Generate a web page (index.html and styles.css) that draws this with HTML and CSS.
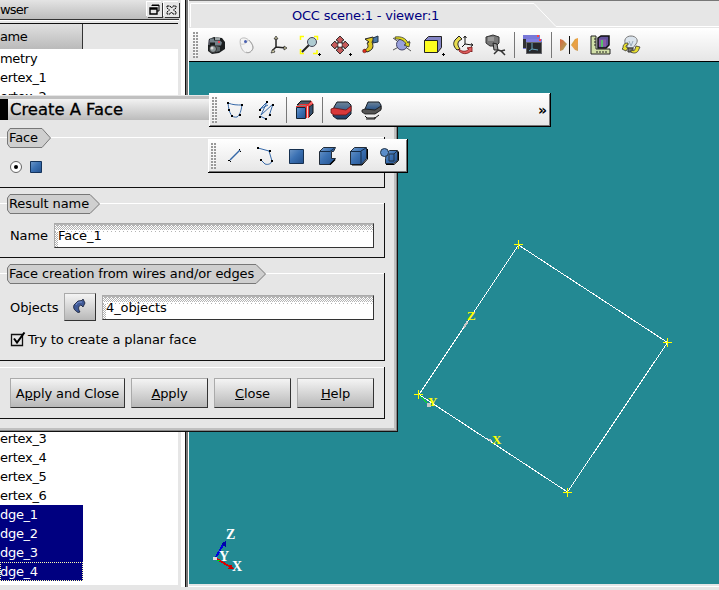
FILE: index.html
```html
<!DOCTYPE html>
<html lang="en">
<head>
<meta charset="utf-8">
<title>OCC scene</title>
<link rel="stylesheet" href="styles.css">
</head>
<body>
<svg width="0" height="0" class="defs">
  <defs>
    <linearGradient id="blue" x1="0" y1="0" x2="1" y2="1"><stop offset="0" stop-color="#6f98c8"/><stop offset=".45" stop-color="#3c72b4"/><stop offset="1" stop-color="#23508c"/></linearGradient>
    <linearGradient id="slate" x1="0" y1="0" x2="0" y2="1"><stop offset="0" stop-color="#6e8396"/><stop offset=".5" stop-color="#3a618f"/><stop offset="1" stop-color="#1c3a60"/></linearGradient>
    <linearGradient id="warm" x1="0" y1="0" x2="1" y2="1"><stop offset="0" stop-color="#d8643c"/><stop offset="1" stop-color="#a8b060"/></linearGradient>
    <linearGradient id="warm2" x1="0" y1="0" x2="1" y2="1"><stop offset="0" stop-color="#a8a850"/><stop offset=".5" stop-color="#f0a040"/><stop offset="1" stop-color="#c8a060"/></linearGradient>
    <pattern id="dither" width="4" height="8" patternUnits="userSpaceOnUse"><path d="M0 .5h4M1 1.500h3M0 2.500h1m1 0h1M1 3.500h1m1 0h1M0 4.500h1m1 0h1M1 5.500h1m1 0h1M0 7.500h1" stroke="#b4b4b4"/></pattern>
    <pattern id="dither-side" width="4" height="4" patternUnits="userSpaceOnUse"><path d="M0 .5h1m1 0h1M1 1.500h1M0 2.500h1m1 0h1M1 3.500h1" stroke="#b4b4b4"/></pattern>
  </defs>
</svg>
<div class="app">
  <aside class="browser">
    <div class="dock-title"><span>wser</span>
      <svg class="dock-btn" viewBox="0 0 15 15"><path d="M5 4V3h7v6h-2M5 3.500h7" fill="none" stroke="#000"/><path d="M3 6h7v6H3zM3 7h7" fill="none" stroke="#000" stroke-width="1.400"/></svg>
      <svg class="dock-btn" viewBox="0 0 15 15"><path d="M3 4h3l1.500 2L9 4h3v2L9.500 8 12 10v2H9L7.500 10 6 12H3v-2L5.500 8 3 6z" fill="#e6e6e6" stroke="#000" stroke-dasharray="2 .6"/></svg>
    </div>
    <div class="tree-head"><span>ame</span></div>
    <div class="tree">
      <div class="row">metry</div><div class="row">ertex_1</div><div class="row">ertex_2</div>
      <div class="gap"></div>
      <div class="row">ertex_3</div><div class="row">ertex_4</div><div class="row">ertex_5</div><div class="row">ertex_6</div>
      <div class="row sel">dge_1</div><div class="row sel">dge_2</div><div class="row sel">dge_3</div><div class="row sel cur">dge_4</div>
    </div>
  </aside>
  <div class="splitter"></div>
  <main class="viewer">
    <div class="tab">
      <svg viewBox="189 0 530 28"><path d="M189 .5h530" stroke="#777"/><path d="M190.500 27V3.500H534L556 26.500H719" fill="none" stroke="#fff"/></svg>
      <span>OCC scene:1 - viewer:1</span>
    </div>
    <div class="bar view-bar">
      <i class="grip"></i>
      <svg viewBox="202 32 31 26"><path d="M209 39l5-2 8 1 3 4v7l-6 4-7 1-4-3v-6z" fill="#1c1f20"/><path d="M210 38.500h4v2h6l2 2-1 3h-6v-3h-5z" fill="#75828a"/><path d="M215 37l5 1v2h-5z" fill="#9aa3a5"/><path d="M218 41h2v2h-2z" fill="#e45"/><path d="M209 40v5" stroke="#889"/><path d="M216 46l4 1v4l-4 1z" fill="#5a6466"/><circle cx="213" cy="49" r="3.500" fill="#8c9698" stroke="#333"/><circle cx="212" cy="48" r="1.500" fill="#ddd"/></svg>
      <svg viewBox="233 32 31 26"><path d="M240.500 39c3-2 6-1 8 1 4 4 6 8 3 11-3 3-7 2-9-1-2-3-3-8-2-11z" fill="#f4f4f4" stroke="#bbb"/><path d="M249 40c4 4 5 8 3 10-2 3-4 3-6 2" fill="none" stroke="#999" stroke-width=".8"/><path d="M241 44c3 1 6-1 7-4" fill="none" stroke="#ccc"/><circle cx="245.500" cy="41.500" r="1.500" fill="#4960b0"/></svg>
      <svg viewBox="264 32 31 26"><path d="M276 37v10M276 47l-4 4M276 47l10 1" stroke="#222" stroke-width="1.500"/><path d="M274 39l2-3 2 3zM273 49l-2 4 4-1zM284 46l3 2-3 2z" fill="#ddd8b0" stroke="#222" stroke-width=".7"/></svg>
      <svg viewBox="295 32 31 26"><path d="M300.500 40v-3.500H304M314 36.500h3.500V40M300.500 49v4.500H304M313 53.500h4V50" fill="none" stroke="#ff0" stroke-width="1.500"/><path d="M309 45l-7 7" stroke="#222" stroke-width="2"/><circle cx="312" cy="42" r="4.500" fill="#aecbd2" stroke="#445"/><path d="M318 54.500h3m-1.500-1.500v3" stroke="#000"/></svg>
      <svg viewBox="326 32 31 26"><path d="M340 36l4 4-2 1v2h-4v-2l-2-1zM340 54l4-4-2-1v-2h-4v2l-2 1zM331 45l4-4 1 2h2v4h-2l-1 2zM349 45l-4-4-1 2h-2v4h2l1 2z" fill="#c65b5b" stroke="#222" stroke-width=".9"/><path d="M338.500 43.500h3v3h-3z" fill="#fff"/><path d="M349 54.500h3m-1.500-1.500v3" stroke="#000"/></svg>
      <svg viewBox="357 32 31 26"><path d="M369 42l-4-3 8-2 1 2-2 3c2 5 1 8-5 10l-3-2c4-1 5-4 3-7z" fill="#dec820" stroke="#222"/><path d="M373 38l5-2v6l-5 1z" fill="#4a78a5" stroke="#234"/><circle cx="364.500" cy="51" r="1.800" fill="#e03020" stroke="#400" stroke-width=".5"/></svg>
      <svg viewBox="388 32 31 26"><path d="M393 38l18 13M393 50l17-9" stroke="#555"/><circle cx="402" cy="44.500" r="5.500" fill="#98a0dc" stroke="#446"/><path d="M395 37c6-1 11 1 13 6l2-1-1 5-5-2 2-1c-2-4-6-5-11-5z" fill="#ded820" stroke="#222" stroke-width=".7"/></svg>
      <svg viewBox="419 32 31 26"><path d="M424.500 40.500l4-4h13v11l-4 5z" fill="#8384c4" stroke="#222"/><path d="M424.500 40.500h13v12h-13z" fill="#fdfd20" stroke="#222"/><path d="M442 54.500h3m-1.500-1.500v3" stroke="#000"/></svg>
      <svg viewBox="450 32 31 26"><path d="M455 40l4-4 3 3-3 2c-2 3-1 5 1 8l-3 1c-4-4-4-7-2-10z" fill="#e8dc50" stroke="#222"/><path d="M459 49c3 3 7 3 10 0l-2-1 5-1v5l-1-1c-4 4-9 3-12 0z" fill="#df5d5d" stroke="#711" stroke-width=".8"/><path d="M465 37v7l7 1M465 44l-3 3M463.500 38l1.500-2 1.500 2M471 43.500l2 1.500-2 1.500" fill="none" stroke="#111"/></svg>
      <svg viewBox="481 32 31 26"><path d="M486 37l7-2 6 2v6l-3 3h-6l-4-3z" fill="#777" stroke="#333"/><path d="M488 37h6v4h-6z" fill="#999"/><path d="M493 43l4 1 1 6h-4z" fill="#999" stroke="#222"/><path d="M498 50l-4 4M498 50l3 1 4 4M501 51l4-1" stroke="#333" stroke-width="1.500" fill="none"/></svg>
      <b class="sep"></b>
      <svg viewBox="518 32 31 26"><path d="M523 35h17v14h-17z" fill="#7878d8"/><path d="M523 39h15v9h-15z" fill="#333"/><path d="M526 39h16v15h-16z" fill="#8080e0"/><path d="M526.500 42.500h15v11h-15z" fill="#26282c" stroke="#666"/><path d="M532 43v6l6 1M532 49l-3 2" stroke="#67a8c0" fill="none"/><path d="M537 36h2M539 40h2" stroke="#f44" stroke-width="2"/></svg>
      <b class="sep"></b>
      <svg viewBox="555 32 31 26"><path d="M560 39l3 1 4 4-4 6-3 1z" fill="url(#warm)"/><path d="M578 38l-3 1-4 6 4 5 3 1z" fill="url(#warm2)"/><path d="M569.500 36v18" stroke="#111"/></svg>
      <svg viewBox="586 32 31 26"><path d="M591 36h5v13h14v5h-19z" fill="#d2e0a8" stroke="#222"/><path d="M598 38l3-2h8v9l-3 3h-8z" fill="#63539b" stroke="#111" stroke-width="1.500"/><path d="M599 39.500h7v7h-7z" fill="#8a5ba8"/><path d="M602 40v7" stroke="#56c36b" stroke-width="2"/><path d="M594 39h2m-2 3h2m-2 3h2m1 6v2m3-2v2m3-2v2m3-2v2" stroke="#222"/></svg>
      <svg viewBox="617 32 31 26"><path d="M628 48l-2-3c-3-5 0-9 5-9s8 4 5 8l-3 4z" fill="#dbe4ed" stroke="#777"/><path d="M629 41l2 5 2-5" fill="none" stroke="#9ab"/><path d="M628 48h5v4h-5z" fill="#777" stroke="#333"/><path d="M628 43c-4 0-5 2-5 5l-1 1 4 2 2-3-2-1c0-1 0-2 2-2zM631 52c3 2 7 1 8-3l1-2-4-1-1 3c0 2-2 2-4 1z" fill="#e8e030" stroke="#333" stroke-width=".8"/></svg>
    </div>
    <svg class="scene" viewBox="189 62 530 522">
      <g shape-rendering="crispEdges">
        <path d="M518.500 245L419 394.500 567.500 492 667.500 342.500z" fill="none" stroke="#fff"/>
        <path d="M420 396l8 8" stroke="#0f0"/>
        <path d="M514 244.500h9m-4.500-4.500v9M663 342.500h9m-4.500-4.500v9M563 492.500h9m-4.500-4.500v9M414 394.500h9m-4.500-4.500v9" stroke="#ff0"/>
        <path d="M463 327l4-7 1 3-3 5zM485 437l7 3-1 3zM427 403h4v4h-4z" fill="#c8c8c8"/>
        <path d="M216 557l8-14" stroke="#00d" stroke-width="2"/><path d="M221 544l5-3v6z" fill="#00a"/>
        <path d="M217 559l15 9" stroke="#d00" stroke-width="2"/><path d="M228 569l6 0-3-5z" fill="#c00"/>
        <path d="M213 557h4v3h-4z" fill="#ddd"/><path d="M217 560h3" stroke="#0d0"/>
      </g>
      <g class="axis"><text x="467" y="320">Z</text><text x="428" y="406">Y</text><text x="492" y="444">X</text></g>
      <g class="axis white"><text x="226" y="539">Z</text><text x="219" y="561">Y</text><text x="232" y="571">X</text></g>
    </svg>
  </main>
</div>

<section class="dialog">
  <h1>Create A Face</h1>
  <div class="groups">
    <fieldset class="g1">
      <div class="legend"><svg viewBox="0 0 45 20"><path d="M3 .5h32L43.500 10 35 19.500H3L.5 16V4z" class="tag"/></svg><span>Face</span></div>
      <div class="line radio"><svg width="38" height="14" viewBox="10 160 38 14"><circle cx="16" cy="167" r="5.500" fill="#fff" stroke="#555" stroke-width=".9"/><circle cx="16" cy="167" r="2" fill="#000"/><path d="M30.500 161.500h11v11h-11z" fill="url(#blue)" stroke="#14335c"/></svg></div>
    </fieldset>
    <fieldset class="g2">
      <div class="legend"><svg viewBox="0 0 94 20"><path d="M3 .5h80L92.500 10 83 19.500H3L.5 16V4z" class="tag"/></svg><span>Result name</span></div>
      <div class="line name"><label>Name</label><div class="field"><svg><rect width="100%" height="8" fill="url(#dither)"/><rect y="8" width="4" height="20" fill="url(#dither-side)"/></svg><span>Face_1</span></div></div>
    </fieldset>
    <fieldset class="g3">
      <div class="legend"><svg viewBox="0 0 260 20"><path d="M3 .5h246L258.500 10 249 19.500H3L.5 16V4z" class="tag"/></svg><span>Face creation from wires and/or edges</span></div>
      <div class="line objects"><label>Objects</label><button class="pick"><svg width="20" height="20" viewBox="70 297 20 20"><path d="M74 305l4-4 4-.5 1-1.500 2 4-2 4-2-2c-3 1-3 4-1 7l-2 .5c-4-2.500-5-4.500-4-7.500z" fill="#405a96" stroke="#101830" stroke-width=".8"/><path d="M76 305c1-3 3-3 6-3" fill="none" stroke="#7c96d8"/></svg></button><div class="field"><svg><rect width="100%" height="8" fill="url(#dither)"/><rect y="8" width="4" height="20" fill="url(#dither-side)"/></svg><span>4_objects</span></div></div>
      <div class="line check"><svg width="16" height="16" viewBox="10 331 16 16"><path d="M11.500 333.500h11v11h-11z" fill="#e6e6e6" stroke="#111" stroke-width="1.300"/><path d="M14 337.500l3 4 7.500-10" fill="none" stroke="#000" stroke-width="2"/></svg><span>Try to create a planar face</span></div>
    </fieldset>
    <fieldset class="g4">
      <button class="wide">A<u>p</u>ply and Close</button><button><u>A</u>pply</button><button><u>C</u>lose</button><button><u>H</u>elp</button>
    </fieldset>
  </div>
</section>

<div class="bar floating first">
  <i class="grip"></i>
  <svg viewBox="220 97 31 26"><path d="M228 103c5 2 9 2 14 2-1 6-2 10-5 12-5 1-8-3-9-14z" fill="none" stroke="#3568a8"/><path d="M227 102h2v2h-2zM241 104h2v2h-2zM228 109h2v2h-2zM239 114h2v2h-2zM231 115h2v2h-2z" fill="#000"/></svg>
  <svg viewBox="251 97 31 26"><path d="M260 109l7-7-6 13 12-11-4 12M260 109l8-4M260 116l6 3" fill="none" stroke="#3568a8"/><path d="M266 101h2v2h-2zM272 104h2v2h-2zM259 109h2v2h-2zM269 114h2v2h-2zM259 116h2v2h-2zM265 118h2v2h-2z" fill="#000"/></svg>
  <b class="sep"></b>
  <svg viewBox="289 97 31 26"><path d="M296.500 107.500h9v11h-9z" fill="url(#blue)" stroke="#123"/><path d="M297 105l4-4h10l-3 4z" fill="#4a5a68" stroke="#111"/><path d="M309 107l4-3v9l-4 4z" fill="#35506e" stroke="#111"/><path d="M296 106.500h10.500V118M299 104.500h8l-1 2 6-5M308.500 118v-12l4.500-3" fill="none" stroke="#e33" stroke-width="1.200"/></svg>
  <b class="sep"></b>
  <svg viewBox="326 97 31 26"><path d="M334 107l3-5h11l3 3v9l-5 5h-9l-4-3z" fill="url(#slate)" stroke="#151c24"/><path d="M331 109l3-1 12 2 5-4v5l-5 4h-12l-3-2z" fill="#d8383a" stroke="#611" stroke-width=".8"/></svg>
  <svg viewBox="357 97 31 26"><path d="M365 109l3-7h11l2 3v4l-5 4h-10z" fill="url(#slate)" stroke="#151c24"/><path d="M362 110l3-1 10 1 6-4v4l-6 4h-10l-3-2z" fill="#555" stroke="#111" stroke-width=".8"/><path d="M365 116l2 2h8l4-3M366 119h9v-2" fill="none" stroke="#111"/></svg>
  <span class="more">»</span>
</div>
<div class="bar floating second">
  <i class="grip"></i>
  <svg viewBox="219 143 31 26"><path d="M230 160l10-10" stroke="#3568a8" stroke-width="1.500"/><path d="M239 149h1v1h-1zM240 151h1v1h-1zM228 160h2v1h-2zM230 161h1v1h-1z" fill="#000"/></svg>
  <svg viewBox="250 143 31 26"><path d="M258 148l11 3 3 10c-1 3-4 4-7 3l-4-4" fill="none" stroke="#3568a8"/><path d="M257 147h2v2h-2zM269 150h2v2h-2zM260 159h2v2h-2zM271 160h2v2h-2z" fill="#000"/></svg>
  <svg viewBox="281 143 31 26"><path d="M289.500 149.500h14v14h-14z" fill="url(#blue)" stroke="#163050"/></svg>
  <svg viewBox="312 143 31 26"><path d="M319.500 151.500l4-4h12l-2 4h-2v7h4l-3 4-2 2h-11z" fill="url(#blue)" stroke="#222c38"/><path d="M320 151.500h10l4-3" fill="none" stroke="#152c48"/><path d="M330 164.500l5-5" stroke="#000" stroke-width="1.500"/></svg>
  <svg viewBox="343 143 31 26"><path d="M350.500 151.500l4-4h12v11l-5 6h-11z" fill="url(#blue)" stroke="#222c38"/><path d="M350 151.500h11v13M361 151l5-3" fill="none" stroke="#152c48"/><path d="M352 165h10l5.500-6v-10" fill="none" stroke="#000"/></svg>
  <svg viewBox="374 143 31 26"><path d="M386.500 153.500l3-3h8v10l-4 3h-8v-5z" fill="url(#blue)" stroke="#222c38"/><path d="M389 154h5v7h-5zM394 154l3-3" fill="none" stroke="#234"/><path d="M386 164.500h8l4.500-4v-9" fill="none" stroke="#000"/><circle cx="384.500" cy="152.500" r="4" fill="#5b8dc9" stroke="#234"/></svg>
</div>
</body>
</html>
```
FILE: styles.css
```css
* { box-sizing: border-box; }
body { margin: 0; width: 719px; height: 590px; overflow: hidden; background: #e6e6e6; font: 13px/19px "DejaVu Sans", sans-serif; letter-spacing: -.1px; color: #000; }
svg { display: block; flex: none; }
.defs { position: absolute; }
.app { display: flex; height: 590px; }

/* object browser dock */
.browser { width: 181px; display: flex; flex-direction: column; padding-right: 2px; flex: none; }
.dock-title { display: flex; align-items: center; gap: 2px; height: 20px; padding: 0 0 1px; background: linear-gradient(#e4e4e4, #bcbcbc); border-bottom: 1px solid #333; }
.dock-title span { flex: 1; letter-spacing: -.8px; padding-top: 1px; }
.dock-btn { width: 15px; height: 15px; background: #e6e6e6; box-shadow: -1px -1px #fff, 1px 1px #333; }
.tree-head { height: 29px; padding-top: 4px; border-top: 1px solid #fff; }
.tree-head::before { content: ""; display: block; height: 1px; background: #111; margin: -2px 0 0; width: 178px; }
.tree-head span { display: block; width: 83px; height: 26px; padding-top: 3px; background: linear-gradient(#e0e0e0, #bababa); border: solid #333; border-width: 0 1px 1px 0; letter-spacing: -.5px; }
.tree { width: 178px; height: 536px; background: #fff; }
.row { height: 19px; width: 83px; white-space: pre; letter-spacing: -.3px; }
.gap { height: 323px; }
.sel { background: #000080; color: #fff; }
.cur { outline: 1px dotted #ffffb0; outline-offset: -1px; }
.splitter { flex: none; width: 8px; height: 587px; background: linear-gradient(90deg, #fff 0 4px, #111 4px 5px, #777 5px 7px, #fff 7px); }

/* viewer */
.viewer { width: 530px; height: 587px; display: flex; flex-direction: column; border-bottom: 1px solid #fff; }
.tab { height: 28px; display: grid; }
.tab > * { grid-area: 1 / 1; }
.tab span { color: #000080; padding: 6px 0 0 103px; letter-spacing: -.22px; }
.bar { display: flex; align-items: center; background: linear-gradient(#fff, #e6e6e6); }
.bar svg { width: 31px; height: 26px; }
.view-bar { height: 34px; padding-left: 4px; border-bottom: 1px solid #000; }
.grip { flex: none; width: 5px; height: 26px; margin-right: 4px; background: repeating-linear-gradient(#0000 0 2px, #f8f8f8 2px 3px), linear-gradient(90deg, #999 2px, #0000 2px 3px, #999 3px); }
.sep { flex: none; width: 1px; height: 26px; margin: 0 3px 0 2px; background: #777; }
.scene { width: 530px; height: 522px; background: #238993; }
.axis { font: bold 13px "Liberation Serif", serif; fill: #ff0; }
.white { fill: #fff; font-size: 14px; }

/* dialog */
.dialog { position: absolute; left: 0; top: 95px; width: 398px; height: 337px; border: solid #111; border-width: 0 1px 1px 0; box-shadow: inset -1px -1px #888, inset -3px -3px #c0c0c0, inset 0 1px #e6e6e6, inset 0 4px #c0c0c0; background: #e6e6e6; padding: 4px 3px 3px 0; }
.dialog h1 { margin: 0; height: 21px; font: 16.400px/21px "DejaVu Sans", sans-serif; letter-spacing: 0; -webkit-text-stroke: .3px #000; border-left: 8px solid #000; padding-left: 2px; background: linear-gradient(#f2f2f2, #bcbcbc); }
.groups { display: flex; flex-direction: column; padding: 17px 0 0; width: 385px; }
fieldset { min-width: 0; margin: 0; padding: 0; border: solid #111; border-width: 0 1px 1px 0; box-shadow: inset 0 1px #fff; }
.g1 { height: 51px; margin-bottom: 15px; }
.g2 { height: 55px; margin-bottom: 15px; }
.g3 { height: 88px; margin-bottom: 6px; }
.g4 { height: 52px; display: flex; gap: 6px; padding: 11px 0 0 10px; }
.legend { display: grid; width: max-content; height: 20px; margin: -9px 0 0 7px; }
.legend > * { grid-area: 1 / 1; }
.legend svg { height: 20px; }
.g1 .legend svg { width: 45px; }
.g2 .legend svg { width: 94px; }
.g3 .legend svg { width: 260px; }
.legend span { padding-left: 2px; }
.tag { fill: #cfcfcf; stroke: #777; }
.line { display: flex; align-items: center; padding-left: 10px; }
.radio { margin-top: 12px; }
.name { margin-top: 9px; }
.name label { width: 44px; }
.objects { margin-top: 9px; height: 28px; }
.objects label { width: 54px; }
.field { display: grid; height: 25px; flex: none; background: #fff; border: 1px solid #333; border-top-color: #aaa; border-left-color: #aaa; width: 320px; }
.field > * { grid-area: 1 / 1; }
.field svg { width: 100%; height: 23px; }
.field span { padding: 2px 0 0 3px; }
.objects .field { width: 272px; }
button { width: 77px; height: 30px; padding: 0; font: inherit; letter-spacing: -.1px; color: #000; background: linear-gradient(#f4f4f4, #b8b8b8); border: 1px solid; border-color: #aaa #333 #333 #aaa; border-radius: 0; white-space: nowrap; }
.wide { width: 115px; }
button u { text-underline-offset: 1px; }
.pick { width: 32px; height: 28px; margin-right: 6px; display: flex; align-items: center; justify-content: center; }
.check { margin-top: 9px; gap: 2px; }

/* floating toolbars */
.floating { position: absolute; height: 34px; border: solid #000; border-width: 0 1px 1px 0; box-shadow: inset 1px 1px #fff, inset -1px -1px #777; padding: 1px 3px 0; }
.first { left: 209px; top: 93px; width: 342px; }
.second { left: 208px; top: 139px; width: 200px; }
.floating .grip { margin-right: 3px; }
.first .sep { margin: 0 2px 0 4px; }
.first .sep ~ .sep { margin: 0 3px 0 2px; }
.more { margin-left: auto; font-weight: bold; font-size: 14px; }
```
